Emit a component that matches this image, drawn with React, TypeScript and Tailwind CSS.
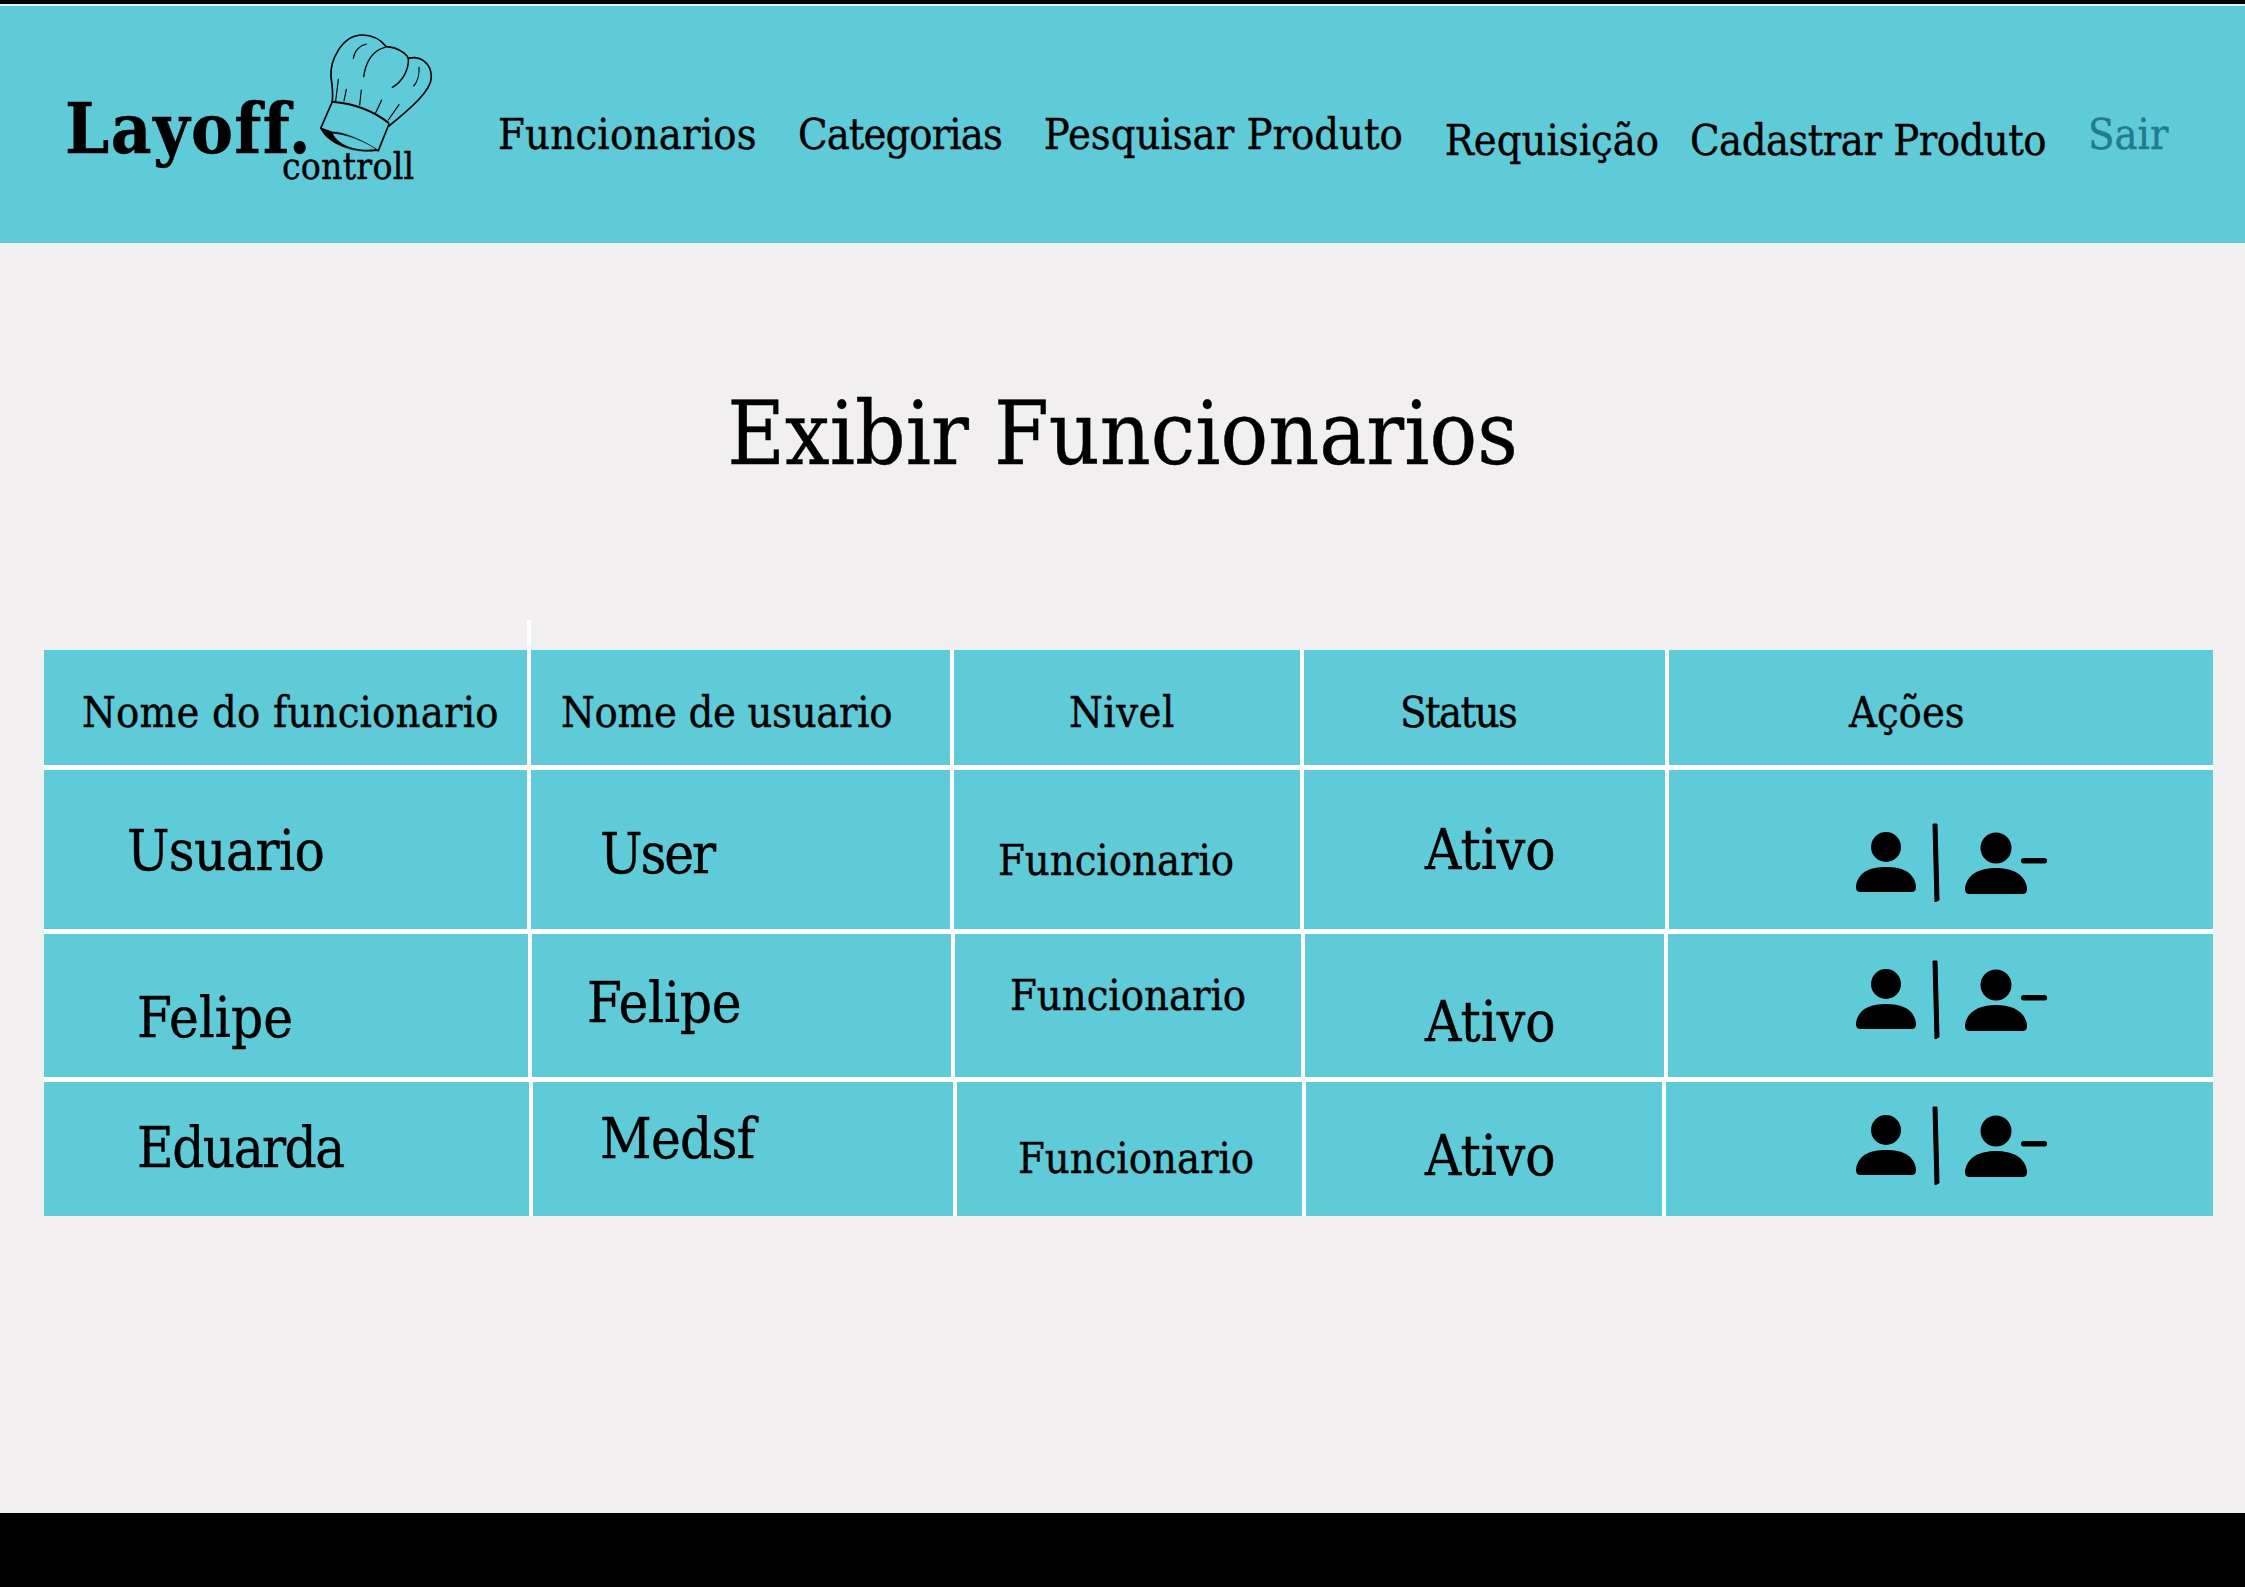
// Tela de funcionarios do Layoff.controll
import type { ReactNode } from 'react';

const serif = "font-['DejaVu_Serif_Condensed','DejaVu_Serif',serif] font-stretch-condensed [-webkit-text-stroke-width:0.4px]";

function ChefHat() {
  return (
    <svg viewBox="0 0 450 450" className="absolute left-[234px] top-[-74px] h-[150px] w-[150px]" fill="none" stroke="#000" strokeWidth="5" strokeLinecap="round" strokeLinejoin="round">
      <path d="M100 245C102 220 100 195 96 172C92 120 130 45 190 45C225 45 250 65 262 80C295 82 322 100 328 115C365 105 397 130 397 172C397 212 335 265 270 318" />
      <path d="M100 245C160 250 220 270 268 308" strokeWidth="6" />
      <path d="M100 245L65 325L238 392L270 312" />
      <path d="M65 325C75 360 150 405 238 392C200 365 140 335 98 335Z" fill="#000" strokeWidth="1" />
      <path d="M100 340C140 340 200 365 232 388C170 398 115 375 100 340Z" fill="#5fcbd8" strokeWidth="2" />
      <path d="M202 72C182 76 166 92 163 115" strokeWidth="3.5" />
      <path d="M258 82C222 90 200 125 194 170" strokeWidth="4" />
      <path d="M328 115C330 150 310 185 280 202" strokeWidth="4.5" />
      <path d="M360 142C362 162 355 185 344 198" strokeWidth="3.5" />
      <path d="M118 178C115 205 112 225 110 243M142 208L135 243M187 210L182 255M248 240L230 278M300 254L268 300" strokeWidth="3.5" />
    </svg>
  );
}

function UserActions() {
  return (
    <svg viewBox="0 0 191 80" className="h-[80px] w-[191px]" fill="#000">
      <circle cx="30" cy="25" r="15" />
      <path d="M4 70C0 70 0 66 0 64C2 50 14 45 30 45C46 45 58 50 60 64C60 66 60 70 56 70Z" />
      <path d="M77 2L81 2L83 78L79 80Z" stroke="#000" strokeWidth="1" strokeLinejoin="round" />
      <circle cx="140" cy="26" r="15.5" />
      <path d="M113 72C109 72 109 68 109 66C111 52 124 46 140 46C156 46 169 52 171 66C171 68 171 72 167 72Z" />
      <rect x="165" y="36" width="26" height="5.5" rx="2.5" />
    </svg>
  );
}

const headers: { label: string; cls: string }[] = [
  { label: 'Nome do funcionario', cls: 'pl-[38px] tracking-[0.2px]' },
  { label: 'Nome de usuario', cls: 'pl-[30px] tracking-[-0.3px]' },
  { label: 'Nivel', cls: 'pl-[115px] tracking-[0.5px]' },
  { label: 'Status', cls: 'pl-[96px] tracking-[-1.5px]' },
  { label: 'Ações', cls: 'pl-[180px]' },
];

// as linhas da tabela nao sao perfeitamente retas, cada uma tem suas colunas
const rows: { grid: string; cells: { text: string; cls: string }[]; actionCls: string }[] = [
  {
    grid: 'h-[159px] grid-cols-[483px_419px_346px_361px_1fr]',
    cells: [
      { text: 'Usuario', cls: 'pl-[83px] pt-[53px] text-[56px] tracking-[-0.6px]' },
      { text: 'User', cls: 'pl-[69px] pt-[56px] text-[56px] tracking-[-2px]' },
      { text: 'Funcionario', cls: 'pl-[44px] pt-[69px] text-[43px]' },
      { text: 'Ativo', cls: 'pl-[121px] pt-[52px] text-[56px]' },
    ],
    actionCls: 'pl-[187px] pt-[52px]',
  },
  {
    grid: 'h-[143px] grid-cols-[484px_419px_346px_359px_1fr]',
    cells: [
      { text: 'Felipe', cls: 'pl-[93px] pt-[56px] text-[56px]' },
      { text: 'Felipe', cls: 'pl-[55px] pt-[41px] text-[56px] tracking-[-0.3px]' },
      { text: 'Funcionario', cls: 'pl-[55px] pt-[40px] text-[43px]' },
      { text: 'Ativo', cls: 'pl-[120px] pt-[60px] text-[56px]' },
    ],
    actionCls: 'pl-[188px] pt-[25px]',
  },
  {
    grid: 'h-[134px] grid-cols-[485px_420px_345px_356px_1fr]',
    cells: [
      { text: 'Eduarda', cls: 'pl-[93px] pt-[38px] text-[56px] tracking-[-1.6px]' },
      { text: 'Medsf', cls: 'pl-[67px] pt-[29px] text-[56px] tracking-[-0.7px]' },
      { text: 'Funcionario', cls: 'pl-[61px] pt-[55px] text-[43px]' },
      { text: 'Ativo', cls: 'pl-[119px] pt-[46px] text-[56px]' },
    ],
    actionCls: 'pl-[190px] pt-[23px]',
  },
];

function Cell({ cls, children }: { cls: string; children: ReactNode }) {
  return <div className={`bg-[#5fcbd8] leading-none text-black ${cls}`}>{children}</div>;
}

export default function App() {
  return (
    <div className={`flex h-[1587px] flex-col bg-[#f1eff0] ${serif}`}>
      <div className="h-[4px] bg-black" />
      <div className="h-[2px] bg-[#e8f6f8]" />

      <header className="flex h-[237px] items-start bg-[#5fcbd8] text-[43px] leading-none text-black">
        <div className="relative ml-[65px] mt-[88px] w-[433px] shrink-0">
          <div className="text-[70px] font-bold tracking-[1.4px]">Layoff.</div>
          <div className="ml-[217px] mt-[-16px] text-[37px] tracking-[0.2px]">controll</div>
          <ChefHat />
        </div>
        <nav className="flex items-start pt-[107px]">
          <a className="tracking-[0.25px]">Funcionarios</a>
          <a className="ml-[41px] tracking-[-0.9px]">Categorias</a>
          <a className="ml-[42px]">Pesquisar Produto</a>
          <a className="ml-[42px] mt-[6px]">Requisição</a>
          <a className="ml-[31px] mt-[6px] tracking-[-0.5px]">Cadastrar Produto</a>
          <a className="ml-[42px] text-[#1f7c8f]">Sair</a>
        </nav>
      </header>

      <main className="flex-1 pl-[44px] pr-[32px]">
        <h1 className="mt-[147px] pr-[12px] text-center text-[88px] leading-none text-black">Exibir Funcionarios</h1>
        <div className="relative mt-[172px] flex flex-col gap-y-[5px] bg-white">
          <div className="absolute left-[483px] top-[-30px] h-[30px] w-[4px] bg-white" />
          <div className="grid h-[115px] grid-cols-[483px_419px_346px_361px_1fr] gap-x-[4px]">
            {headers.map((h) => (
              <Cell key={h.label} cls={`pt-[41px] text-[43px] ${h.cls}`}>{h.label}</Cell>
            ))}
          </div>
          {rows.map((row, i) => (
            <div key={i} className={`grid gap-x-[4px] ${row.grid}`}>
              {row.cells.map((c, j) => (
                <Cell key={j} cls={c.cls}>{c.text}</Cell>
              ))}
              <Cell cls={row.actionCls}><UserActions /></Cell>
            </div>
          ))}
        </div>
      </main>

      <footer className="h-[74px] bg-black" />
    </div>
  );
}
